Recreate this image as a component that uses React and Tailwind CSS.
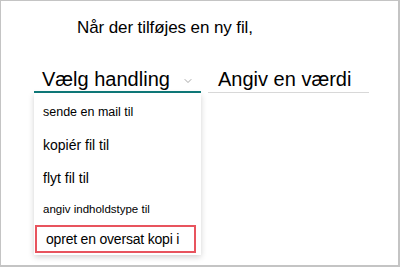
import { ChevronDown } from "lucide-react";

const actions = [
  { label: "sende en mail til", size: "text-[12.5px] h-[33px]" },
  { label: "kopiér fil til", size: "text-[14px] h-[33px]" },
  { label: "flyt fil til", size: "text-[14px] h-[33px]" },
  { label: "angiv indholdstype til", size: "text-[11.5px] h-[30px]" },
  { label: "opret en oversat kopi i", size: "text-[14px] h-[28px] tracking-[-0.2px]", highlight: true },
];

function App() {
  return (
    <div className="w-[400px] h-[267px] bg-white border border-[#c4c4c4] border-b-2 border-r-2 overflow-hidden font-['Liberation_Sans',Arial,sans-serif] text-black">
      <h1 className="pl-[76px] pt-[17px] text-[17px] leading-[20px] tracking-[-0.1px]">Når der tilføjes en ny fil,</h1>

      <div className="flex items-end mt-[29px] pl-[33px]">
        <div className="relative w-[167px]">
          <div className="flex items-center justify-between pl-[8px] pr-[7px] h-[26px] border-b-2 border-[#0f7b7b]">
            <span className="text-[20px] leading-[24px]">Vælg handling</span>
            <ChevronDown className="w-[12px] h-[12px] text-[#8a8a8a] mt-[4px]" strokeWidth={1.5} />
          </div>

          <ul className="absolute left-0 top-full w-[167px] bg-white shadow-[0_2px_6px_rgba(0,0,0,0.18)] pt-[3px] pb-[2px]">
            {actions.map((a) => (
              <li
                key={a.label}
                className={
                  "flex items-center pl-[9px] " +
                  a.size +
                  (a.highlight ? " ml-[1px] mr-[5px] pl-[8px] border-2 border-[#e8545e]" : "")
                }
              >
                {a.label}
              </li>
            ))}
          </ul>
        </div>

        <div className="ml-[7px] w-[161px] h-[26px] border-b border-[#d8d8d8] pl-[10px]">
          <span className="text-[20px] leading-[24px]">Angiv en værdi</span>
        </div>
      </div>
    </div>
  );
}

export default App;
